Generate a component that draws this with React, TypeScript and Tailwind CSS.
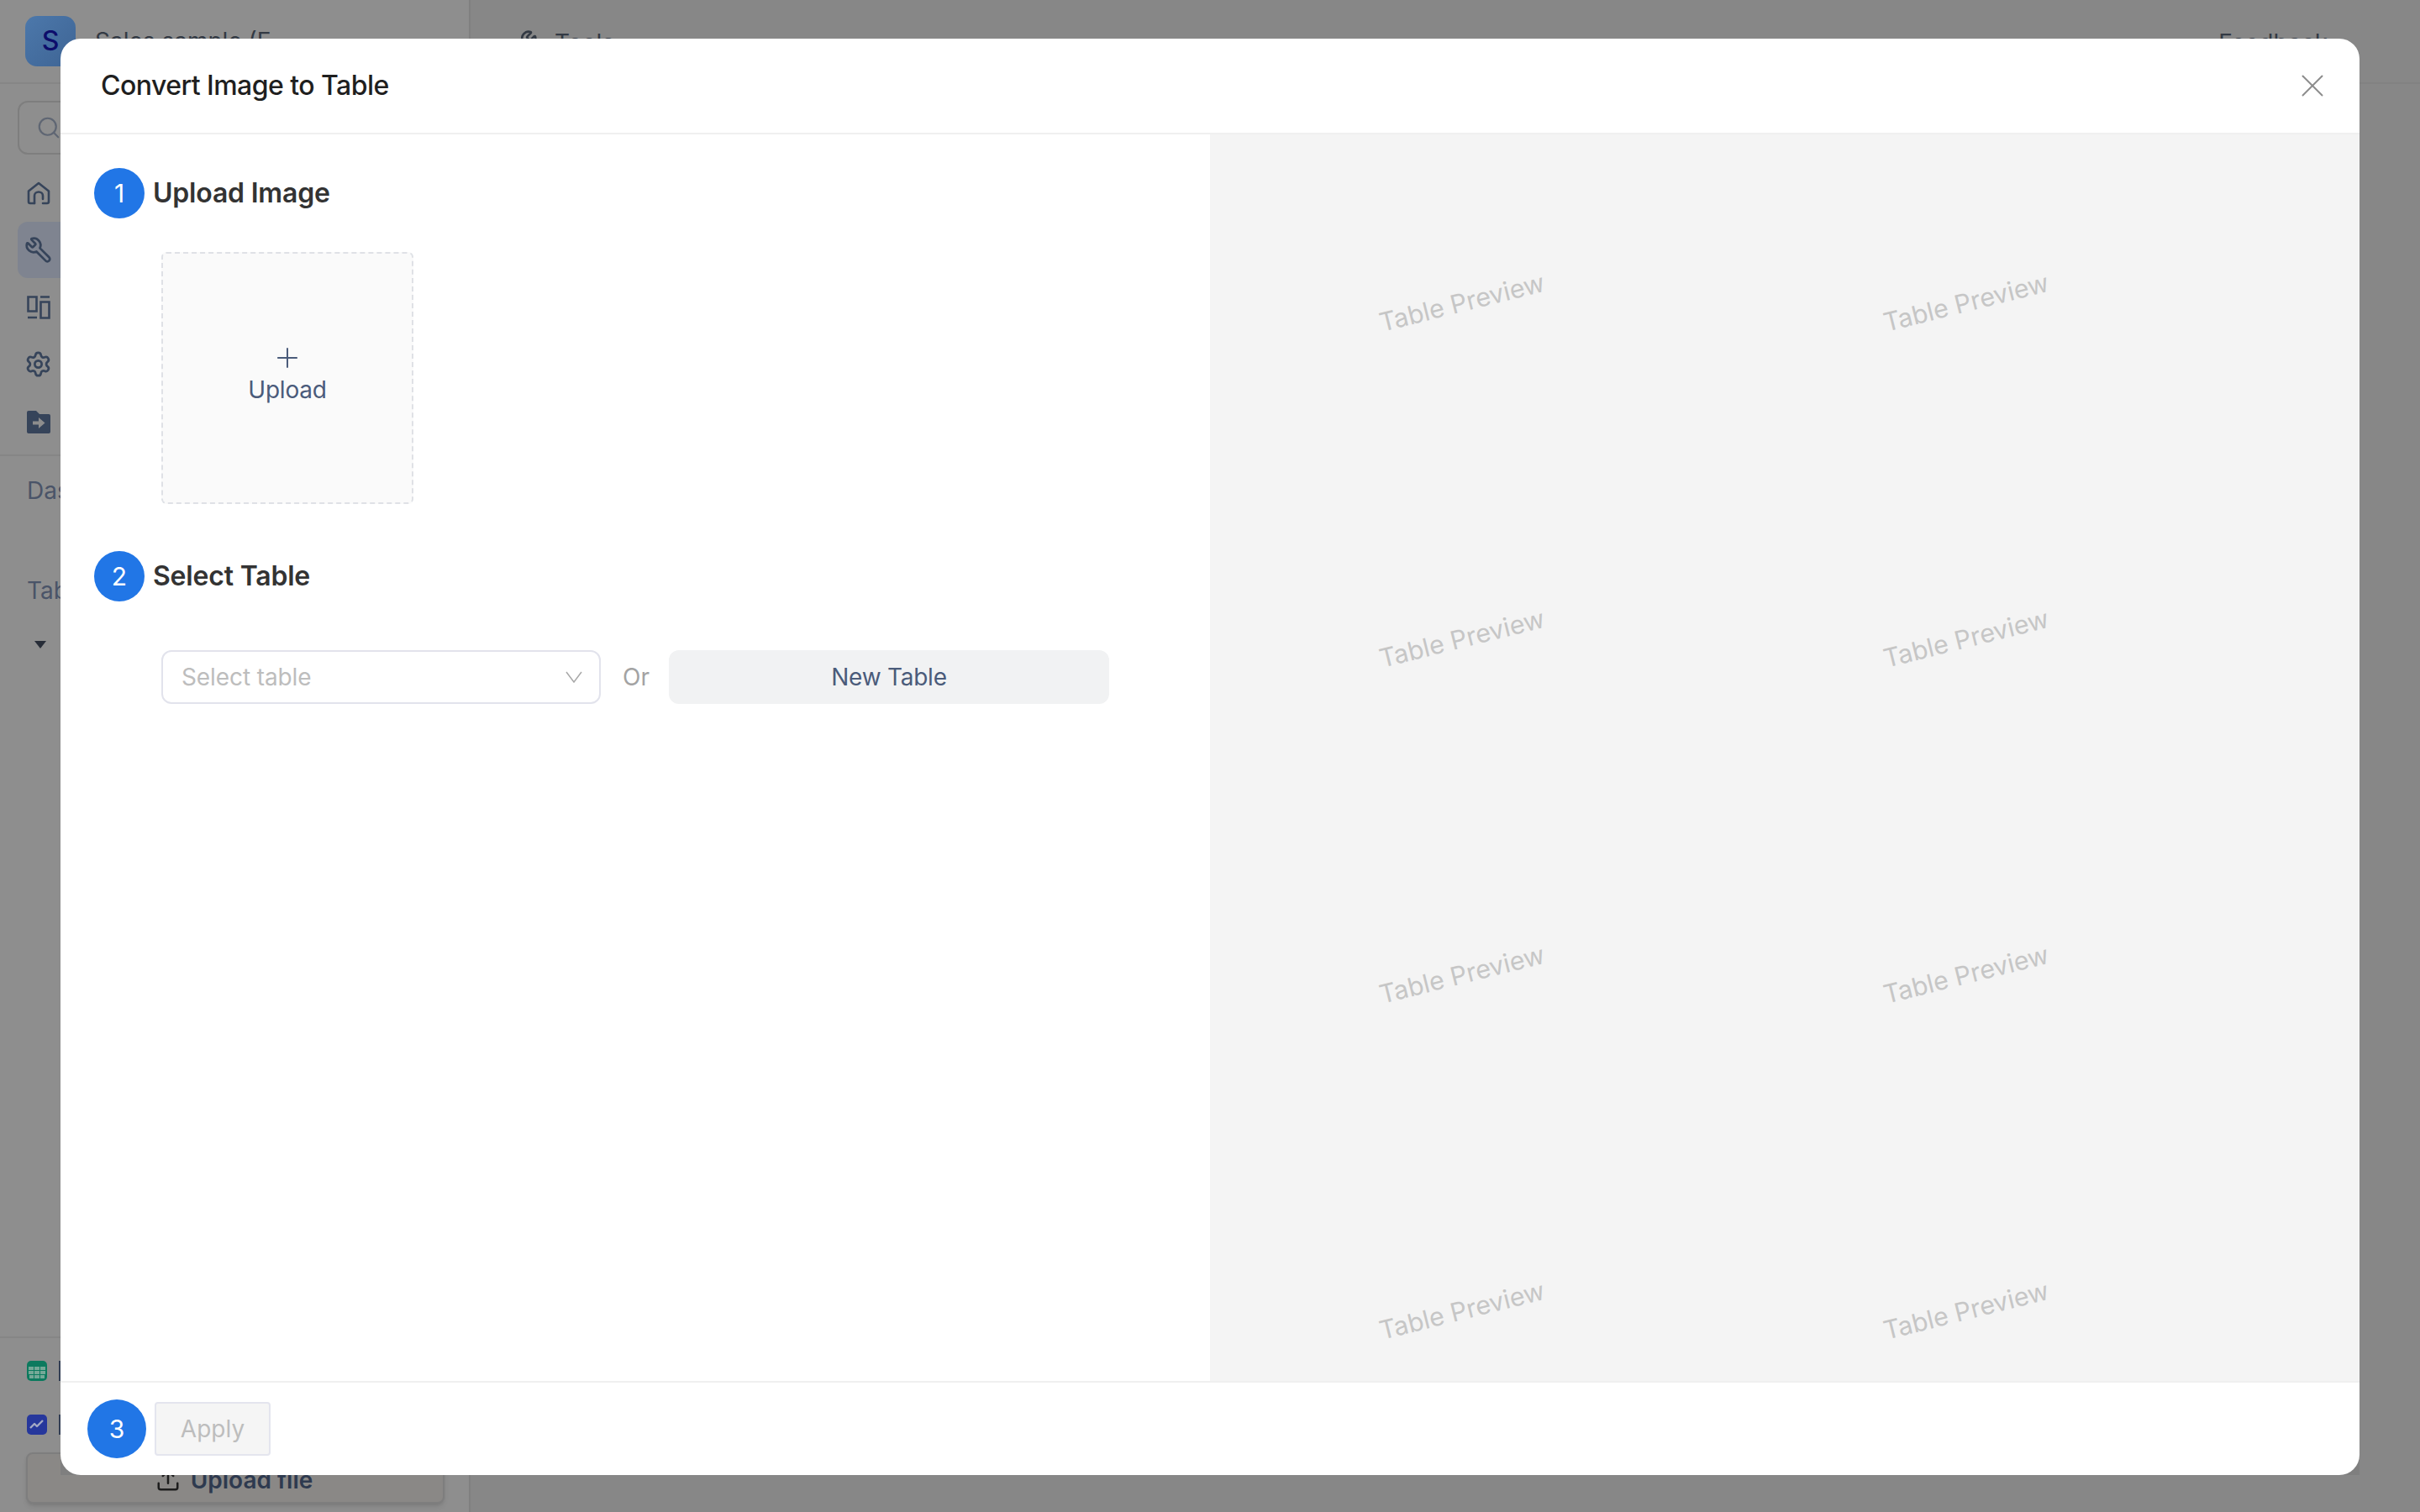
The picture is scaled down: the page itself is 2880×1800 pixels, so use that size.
import { Plus, X, Search, Settings, Upload, Wrench } from "lucide-react";

const font = "font-['Inter','Liberation_Sans',sans-serif]";

function StepBadge({ n, className }: { n: number; className: string }) {
  return (
    <span className={`flex shrink-0 items-center justify-center rounded-full bg-[#2176e6] text-white ${className}`}>
      {n}
    </span>
  );
}

function HomeIcon() {
  return (
    <svg width="28" height="28" viewBox="0 0 28 28" fill="none" stroke="currentColor" strokeWidth="2.6" strokeLinecap="round" strokeLinejoin="round">
      <path d="M9 26H4a2 2 0 0 1-2-2V11.500L14 2l12 9.500V24a2 2 0 0 1-2 2h-5" />
      <path d="M9 26V17a5 4.500 0 0 1 10 0v4" />
    </svg>
  );
}

function LayoutIcon() {
  return (
    <svg width="28" height="28" viewBox="0 0 28 28" fill="none" stroke="currentColor" strokeWidth="2.6">
      <path d="M1.500 1.500h10v17h-10zM16.500 7.500h10v19h-10zM16 1.500h11M1 26h11" />
    </svg>
  );
}

function FolderIcon() {
  return (
    <svg width="28" height="28" viewBox="0 0 28 28">
      <path fill="currentColor" d="M2 1h9l4 4h11a2 2 0 0 1 2 2v19a2 2 0 0 1-2 2H2a2 2 0 0 1-2-2V3a2 2 0 0 1 2-2z" />
      <path fill="#8d8d8d" d="M7 13.500h7V9l7.500 6.500L14 22v-4.500H7z" />
    </svg>
  );
}

function TableBadge() {
  return (
    <svg width="24" height="24" viewBox="0 0 24 24">
      <rect width="24" height="24" rx="5" fill="#0c7a5e" />
      <path fill="#74a897" d="M2 7h6v4H2zM9 7h6v4H9zM16 7h6v4h-6zM2 12h6v4H2zM9 12h6v4H9zM16 12h6v4h-6zM3 17h5v4H3zM9 17h6v4H9zM16 17h5v4h-5z" />
    </svg>
  );
}

function ChartBadge() {
  return (
    <svg width="24" height="24" viewBox="0 0 24 24">
      <rect width="24" height="24" rx="5" fill="#26379c" />
      <path fill="none" stroke="#a3a8c4" strokeWidth="2.400" strokeLinejoin="round" d="M4 16l5-5 3 3 7-7" />
    </svg>
  );
}

function Sidebar() {
  return (
    <div className="flex w-[558px] shrink-0 flex-col bg-[#8e8e8e]">
      <div className="flex h-[100px] shrink-0 items-center gap-[23px] border-b-2 border-[#868686] pl-[30px]">
        <div className="flex h-[60px] w-[60px] items-center justify-center rounded-[14px] bg-gradient-to-br from-[#4c78ab] to-[#3e6494] text-[32px] font-medium text-[#0d0d6b]">
          S
        </div>
        <span className="text-[28px] text-[#333a44]">Sales sample (E</span>
      </div>
      <div className="px-[21px] pt-[20px]">
        <div className="flex h-[64px] items-center rounded-xl border-2 border-[#7e7e7e] pl-[20px]">
          <Search size={30} strokeWidth={1.75} className="text-[#5f6673]" />
        </div>
      </div>
      <div className="mb-[7px] mt-[13px] flex flex-col gap-[3px] px-[21px] text-[#36445a]">
        <div className="flex h-[65px] items-center pl-[11px]"><HomeIcon /></div>
        <div className="-my-px flex h-[67px] items-center rounded-xl bg-[#7f8490] pl-[8px]">
          <Wrench size={33} className="-scale-x-100" />
        </div>
        <div className="flex h-[65px] items-center pl-[11px]"><LayoutIcon /></div>
        <div className="flex h-[65px] items-center pl-[8px]"><Settings size={33} /></div>
        <div className="flex h-[65px] items-center pl-[11px]"><FolderIcon /></div>
      </div>
      <div className="border-t-2 border-[#868686] pl-[32px] pt-[21px] text-[28px] leading-[40px] text-[#4a5468]">Dashboards</div>
      <div className="mt-[79px] pl-[32px] text-[28px] leading-[40px] text-[#4a5468]">Tables</div>
      <div className="mt-[40px] pl-[41px]">
        <svg width="14" height="9" viewBox="0 0 14 9" fill="#272d38" className="block"><path d="M0 0h14L7 9z" /></svg>
      </div>
      <div className="mt-auto flex flex-col border-t-2 border-[#868686] pb-[10px] pt-[27px]">
        <div className="flex h-[64px] items-start gap-[14px] pl-[32px]">
          <TableBadge />
          <div className="h-[24px] w-[3px] bg-[#333f55]" />
        </div>
        <div className="flex h-[45px] items-start gap-[14px] pl-[32px]">
          <ChartBadge />
          <div className="h-[24px] w-[3px] bg-[#333f55]" />
        </div>
        <div className="ml-[31px] flex h-[61px] w-[498px] items-center justify-center gap-[12px] rounded-lg border-2 border-[#7e7e7e] bg-[#8a8886] pr-[3px] pt-[5px] text-[28px] font-semibold text-[#2e3a4f] shadow-md">
          <Upload size={30} className="text-[#1d1d1d]" />
          Upload file
        </div>
      </div>
    </div>
  );
}

function Preview() {
  const marks = Array.from({ length: 8 });
  return (
    <div className="grid w-[1368px] shrink-0 grid-cols-[600px_600px] auto-rows-[400px] overflow-hidden bg-[#f4f4f4]">
      {marks.map((_, i) => (
        <div key={i} className="flex items-center justify-center">
          <span className="-rotate-[14deg] text-[30.5px] text-[#c6c6c6]">Table Preview</span>
        </div>
      ))}
    </div>
  );
}

export default function App() {
  return (
    <div className={`relative flex h-[1800px] w-[2880px] overflow-hidden bg-[#878787] ${font}`}>
      <Sidebar />
      <div className="flex-1 border-l-2 border-[#808080]">
        <div className="flex h-[100px] items-center justify-between border-b-2 border-[#828282] pl-[48px] pr-[110px] pt-[4px] text-[28px] text-[#333a44]">
          <span className="flex items-center gap-[20px]"><Wrench size={32} />Tools</span>
          <span>Feedback</span>
        </div>
      </div>

      {/* darker square corners peek out behind the modal's rounded bottom */}
      <div className="absolute left-[72px] top-[1716px] h-[40px] w-[2736px] bg-[#7f7f7f]" />

      {/* modal sits over the dimmed page */}
      <div className="absolute left-[72px] top-[46px] flex h-[1710px] w-[2736px] flex-col overflow-hidden rounded-[24px] bg-white">
        <div className="flex h-[114px] shrink-0 items-center justify-between border-b-2 border-[#f0f0f0] pl-[48px] pr-[33px]">
          <span className="text-[32px] font-medium tracking-[-0.55px] text-[#1f1f1f]">Convert Image to Table</span>
          <X size={46} strokeWidth={1} className="text-[#8c8c8c]" />
        </div>

        <div className="flex min-h-0 flex-1">
          <div className="w-[1368px] shrink-0 pl-[40px] pt-[40px]">
            <div className="flex items-center gap-[10px]">
              <StepBadge n={1} className="h-[60px] w-[60px] text-[30px]" />
              <span className="text-[32px] font-semibold tracking-[-0.2px] text-[#333333]">Upload Image</span>
            </div>
            <div className="ml-[80px] mt-[40px] flex h-[300px] w-[300px] flex-col items-center justify-center rounded-md border-2 border-dashed border-[#dfe1e6] bg-[#fafafa] text-[#4a5b7a]">
              <Plus size={38} strokeWidth={1.25} className="-mb-[2px] -mt-[8px]" />
              <span className="text-[28px] tracking-[-0.2px]">Upload</span>
            </div>
            <div className="mt-[56px] flex items-center gap-[10px]">
              <StepBadge n={2} className="h-[60px] w-[60px] text-[30px]" />
              <span className="text-[32px] font-semibold tracking-[-0.2px] text-[#333333]">Select Table</span>
            </div>
            <div className="ml-[80px] mt-[58px] flex h-[64px] items-center">
              <div className="flex h-full w-[523px] items-center justify-between rounded-xl border-2 border-[#e2e3ec] pl-[22px] pr-[20px] text-[28px] tracking-[-0.1px] text-[#bdbdbd]">
                Select table
                <svg width="20" height="14" viewBox="0 0 20 14" fill="none" stroke="#a8a8a8" strokeWidth="1.500">
                  <path d="M1 1l9 12 9-12" />
                </svg>
              </div>
              <span className="ml-[26px] mr-[25px] w-[30px] text-[28px] text-[#a3a3a3]">Or</span>
              <div className="flex h-full w-[524px] items-center justify-center rounded-xl bg-[#f1f2f3] text-[28px] tracking-[-0.25px] text-[#4a5b7a]">
                New Table
              </div>
            </div>
          </div>
          <Preview />
        </div>

        <div className="flex h-[112px] shrink-0 items-center gap-[10px] border-t-2 border-[#f0f0f0] pl-[32px]">
          <StepBadge n={3} className="h-[70px] w-[70px] text-[30px]" />
          <div className="flex h-[64px] w-[138px] items-center justify-center rounded border-2 border-[#e4e5ee] bg-[#f5f5f5] text-[28px] text-[#bdbdbd]">
            Apply
          </div>
        </div>
      </div>
    </div>
  );
}
